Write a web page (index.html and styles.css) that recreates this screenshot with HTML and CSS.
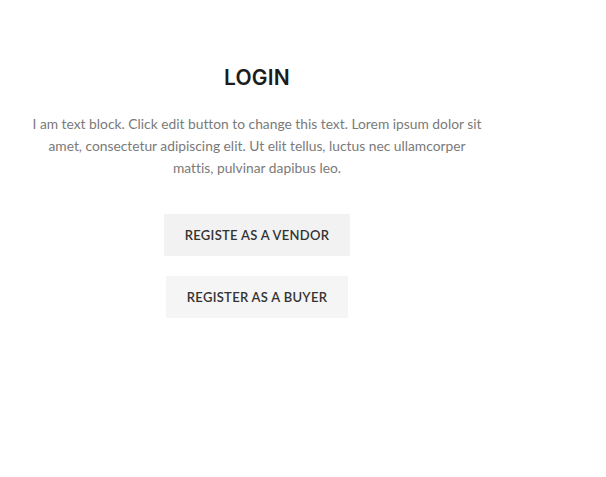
FILE: index.html
```html
<!DOCTYPE html>
<html>
<head>
<meta charset="utf-8">
<link rel="stylesheet" href="styles.css">
</head>
<body>
<main class="page">
  <section class="column">
    <h2 class="title">LOGIN</h2>
    <p class="text">I am text block. Click edit button to change this text. Lorem ipsum dolor sit amet, consectetur adipiscing elit. Ut elit tellus, luctus nec ullamcorper mattis, pulvinar dapibus leo.</p>
    <div class="actions">
      <a class="btn btn-vendor" href="#">REGISTE AS A VENDOR</a>
      <a class="btn btn-buyer" href="#">REGISTER AS A BUYER</a>
    </div>
  </section>
</main>
</body>
</html>
```
FILE: styles.css
```css
html, body {
  margin: 0;
  padding: 0;
  background: #fff;
}
.page {
  width: 606px;
  height: 477px;
}
.column {
  width: 494px;
  margin-left: 10px;
  padding-top: 64px;
  display: flex;
  flex-direction: column;
  align-items: center;
}
.title {
  margin: 0;
  font-family: "Inter", "DejaVu Sans", sans-serif;
  font-weight: 600;
  font-size: 21px;
  line-height: 28px;
  color: #1c1c1c;
  letter-spacing: 0.2px;
}
.text {
  margin: 21px 0 0;
  font-family: "Lato", sans-serif;
  font-size: 13.8px;
  line-height: 22px;
  color: #7a7a7a;
  text-align: center;
  width: 460px;
  font-variant-ligatures: none;
}
.actions {
  margin-top: 35px;
  display: flex;
  flex-direction: column;
  align-items: center;
  gap: 20px;
}
.btn {
  display: flex;
  align-items: center;
  justify-content: center;
  height: 42px;
  font-family: "Lato", sans-serif;
  font-weight: 600;
  font-size: 13px;
  letter-spacing: 0.3px;
  color: #333;
  text-decoration: none;
}
.btn-vendor {
  width: 186px;
  background: #f2f2f2;
}
.btn-buyer {
  width: 182px;
  background: #f5f5f5;
}
```
